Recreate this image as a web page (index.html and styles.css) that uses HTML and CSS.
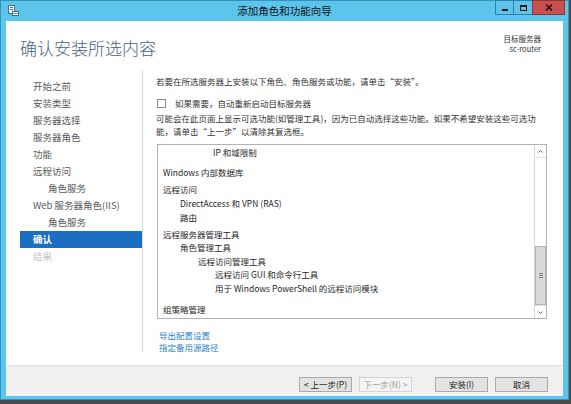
FILE: index.html
```html
<!DOCTYPE html>
<html lang="zh-CN">
<head>
<meta charset="utf-8">
<title>添加角色和功能向导</title>
<link rel="stylesheet" href="styles.css">
</head>
<body>
<div class="window">
  <div class="titlebar">
    <div class="tb-left">
      <svg class="app-icon" width="11" height="11" viewBox="0 0 11 11">
        <rect x="0.5" y="0.5" width="6" height="8" fill="#f4f8fb" stroke="#5a6b78"/>
        <line x1="2" y1="2.5" x2="5" y2="2.5" stroke="#5a6b78"/>
        <line x1="2" y1="4.5" x2="5" y2="4.5" stroke="#5a6b78"/>
        <rect x="4.5" y="6.5" width="6" height="4" fill="#ffffff" stroke="#3d6f92"/>
        <line x1="5.5" y1="8.5" x2="9.5" y2="8.5" stroke="#3a9ad6"/>
      </svg>
    </div>
    <div class="title">添加角色和功能向导</div>
    <div class="caption">
      <div class="cb cb-min"><span class="g-min"></span></div>
      <div class="cb cb-max"><span class="g-max"></span></div>
      <div class="cb cb-close">
        <svg width="8" height="7" viewBox="0 0 8 7"><path d="M1 0.5 L7 6.5 M7 0.5 L1 6.5" stroke="#2a1010" stroke-width="1.6"/></svg>
      </div>
    </div>
  </div>

  <div class="client">
    <div class="header">
      <h1 class="page-title">确认安装所选内容</h1>
      <div class="target">
        <div>目标服务器</div>
        <div>sc-router</div>
      </div>
    </div>

    <div class="main">
      <nav class="nav">
        <div class="nav-item">开始之前</div>
        <div class="nav-item">安装类型</div>
        <div class="nav-item">服务器选择</div>
        <div class="nav-item">服务器角色</div>
        <div class="nav-item">功能</div>
        <div class="nav-item">远程访问</div>
        <div class="nav-item sub">角色服务</div>
        <div class="nav-item">Web 服务器角色(IIS)</div>
        <div class="nav-item sub">角色服务</div>
        <div class="nav-item active">确认</div>
        <div class="nav-item disabled">结果</div>
      </nav>

      <div class="content">
        <p class="intro">若要在所选服务器上安装以下角色、角色服务或功能，请单击“安装”。</p>
        <label class="check"><span class="box"></span>如果需要，自动重新启动目标服务器</label>
        <p class="note">可能会在此页面上显示可选功能(如管理工具)，因为已自动选择这些功能。如果不希望安装这些可选功<br>能，请单击“上一步”以清除其复选框。</p>

        <div class="listbox">
          <div class="list">
            <div class="li lv3 first">IP 和域限制</div>
            <div class="li lv0 sect">Windows 内部数据库</div>
            <div class="li lv0 grp">远程访问</div>
            <div class="li lv1">DirectAccess 和 VPN (RAS)</div>
            <div class="li lv1">路由</div>
            <div class="li lv0 grp">远程服务器管理工具</div>
            <div class="li lv1">角色管理工具</div>
            <div class="li lv2">远程访问管理工具</div>
            <div class="li lv3">远程访问 GUI 和命令行工具</div>
            <div class="li lv3">用于 Windows PowerShell 的远程访问模块</div>
            <div class="li lv0 last">组策略管理</div>
          </div>
          <div class="scrollbar">
            <div class="sb-arrow">
              <svg width="5" height="3" viewBox="0 0 5 3"><path d="M0.5 2.5 L2.5 0.5 L4.5 2.5" fill="none" stroke="#606060"/></svg>
            </div>
            <div class="sb-track">
              <div class="sb-thumb"><span class="grip"></span></div>
            </div>
            <div class="sb-arrow">
              <svg width="5" height="3" viewBox="0 0 5 3"><path d="M0.5 0.5 L2.5 2.5 L4.5 0.5" fill="none" stroke="#606060"/></svg>
            </div>
          </div>
        </div>

        <div class="links">
          <a class="link">导出配置设置</a>
          <a class="link">指定备用源路径</a>
        </div>
      </div>
    </div>

    <div class="footer">
      <button class="btn">&lt; 上一步(P)</button>
      <button class="btn" disabled>下一步(N) &gt;</button>
      <button class="btn primary-gap">安装(I)</button>
      <button class="btn">取消</button>
    </div>
  </div>
</div>
</body>
</html>
```

FILE: styles.css
```css
* {
  box-sizing: border-box;
  margin: 0;
  padding: 0;
}

html, body {
  height: 100%;
}

body {
  background: #4a4a4a;
  font-family: "Noto Sans CJK SC", "Noto Sans", sans-serif;
  font-size: 8.5px;
  color: #333;
}

.window {
  width: 569px;
  height: 400px;
  background: #5dc4eb;
  border: 1px solid #3592bf;
  padding: 0 5px 3px 5px;
  display: flex;
  flex-direction: column;
}

/* title bar */
.titlebar {
  height: 20px;
  flex: none;
  display: grid;
  grid-template-columns: 1fr auto 1fr;
  align-items: start;
}

.app-icon {
  display: block;
  margin: 4px 0 0 2px;
}

.title {
  line-height: 20px;
  font-size: 10.5px;
  color: #111;
  white-space: nowrap;
}

.caption {
  justify-self: end;
  display: flex;
  margin: -1px -2px 0 0;
}

.cb {
  height: 15px;
  border: 1px solid #2f7fab;
  background: #5dc4eb;
  display: flex;
  align-items: center;
  justify-content: center;
}

.cb-min { width: 19px; }
.cb-max { width: 20px; margin-left: -1px; }
.cb-close {
  width: 33px;
  margin-left: -1px;
  background: #c8514f;
  border-color: #8e3434;
}

.g-min {
  display: block;
  width: 6px;
  height: 2px;
  background: #1a1a1a;
  margin-top: 5px;
}

.g-max {
  display: block;
  width: 7px;
  height: 6px;
  border: 1px solid #1a1a1a;
  border-top-width: 2px;
}

/* client area */
.client {
  flex: 1;
  background: #ffffff;
  display: flex;
  flex-direction: column;
  min-height: 0;
}

.header {
  height: 49px;
  flex: none;
  display: flex;
  justify-content: space-between;
  align-items: flex-start;
  padding: 0 22px 0 14px;
}

.page-title {
  margin-top: 17px;
  font-size: 17px;
  line-height: 20px;
  font-weight: 300;
  color: #46637e;
  white-space: nowrap;
}

.target {
  margin-top: 13px;
  text-align: right;
  font-size: 7.5px;
  line-height: 10px;
  color: #333;
}

.main {
  flex: 1;
  display: flex;
  min-height: 0;
}

/* navigation */
.nav {
  width: 137px;
  flex: none;
  margin-bottom: 13px;
  padding-top: 7.5px;
  border-right: 1px solid #dadada;
  font-size: 9.5px;
}

.nav-item {
  height: 17px;
  line-height: 17px;
  margin-left: 14px;
  padding-left: 13px;
  color: #5a5a5a;
  white-space: nowrap;
}

.nav-item.sub {
  padding-left: 28px;
}

.nav-item.active {
  background: #1b6ec2;
  color: #ffffff;
  font-weight: bold;
}

.nav-item.disabled {
  color: #c6c6c6;
}

/* content */
.content {
  flex: 1;
  padding: 5px 16px 0 13px;
  min-width: 0;
}

.intro {
  line-height: 13px;
  color: #333;
  white-space: nowrap;
}

.check {
  display: flex;
  align-items: center;
  margin-top: 8.5px;
  height: 13px;
  color: #333;
}

.check .box {
  width: 9px;
  height: 9px;
  border: 1px solid #8a8a8a;
  background: #fff;
  margin: 0 9px 0 1px;
}

.note {
  margin-top: 2px;
  line-height: 13px;
  color: #333;
  white-space: nowrap;
}

.listbox {
  margin: 6.5px 0 0 1px;
  height: 175px;
  border: 1px solid #b2b2b2;
  display: flex;
  overflow: hidden;
}

.list {
  flex: 1;
  padding-top: 1.2px;
  color: #1e1e1e;
  overflow: hidden;
}

.li {
  line-height: 13.6px;
  white-space: nowrap;
}

.lv0 { padding-left: 5px; }
.lv1 { padding-left: 22px; }
.lv2 { padding-left: 40px; }
.lv3 { padding-left: 57px; }
.lv3.first { padding-left: 55px; }

.grp { margin-top: 3.5px; }
.sect { margin-top: 6.5px; }
.last { margin-top: 7.5px; }

.scrollbar {
  width: 12px;
  flex: none;
  border-left: 1px solid #d6d6d6;
  display: flex;
  flex-direction: column;
  background: #ffffff;
}

.sb-arrow {
  height: 12px;
  flex: none;
  display: flex;
  align-items: center;
  justify-content: center;
}

.sb-track {
  flex: 1;
  display: flex;
  flex-direction: column;
  justify-content: flex-end;
  border-top: 1px solid #e2e2e2;
  border-bottom: 1px solid #e2e2e2;
}

.sb-thumb {
  height: 59px;
  background: #dadada;
  border: 1px solid #b3b3b3;
  display: flex;
  align-items: center;
  justify-content: center;
}

.grip {
  display: block;
  width: 4px;
  height: 5px;
  background: repeating-linear-gradient(to bottom, #7c7c7c 0 1px, transparent 1px 2px);
}

.links {
  margin-top: 10px;
  padding-left: 3px;
}

.link {
  display: block;
  line-height: 12px;
  color: #2f84bf;
  text-decoration: none;
}

/* footer */
.footer {
  height: 31px;
  flex: none;
  background: #f0f0f0;
  border-top: 1px solid #e0e0e0;
  display: flex;
  justify-content: flex-end;
  align-items: flex-start;
  gap: 7px;
  padding: 11px 15px 0 0;
}

.btn {
  width: 53px;
  height: 15px;
  font-family: inherit;
  font-size: 8.5px;
  line-height: 13px;
  color: #222;
  background: #e3e3e3;
  border: 1px solid #a9a9a9;
  border-radius: 0;
  padding: 0;
}

.btn:disabled {
  color: #a3a3a3;
  background: #f4f4f4;
  border-color: #d4d4d4;
}

.btn.primary-gap {
  margin-left: 16px;
}
```
